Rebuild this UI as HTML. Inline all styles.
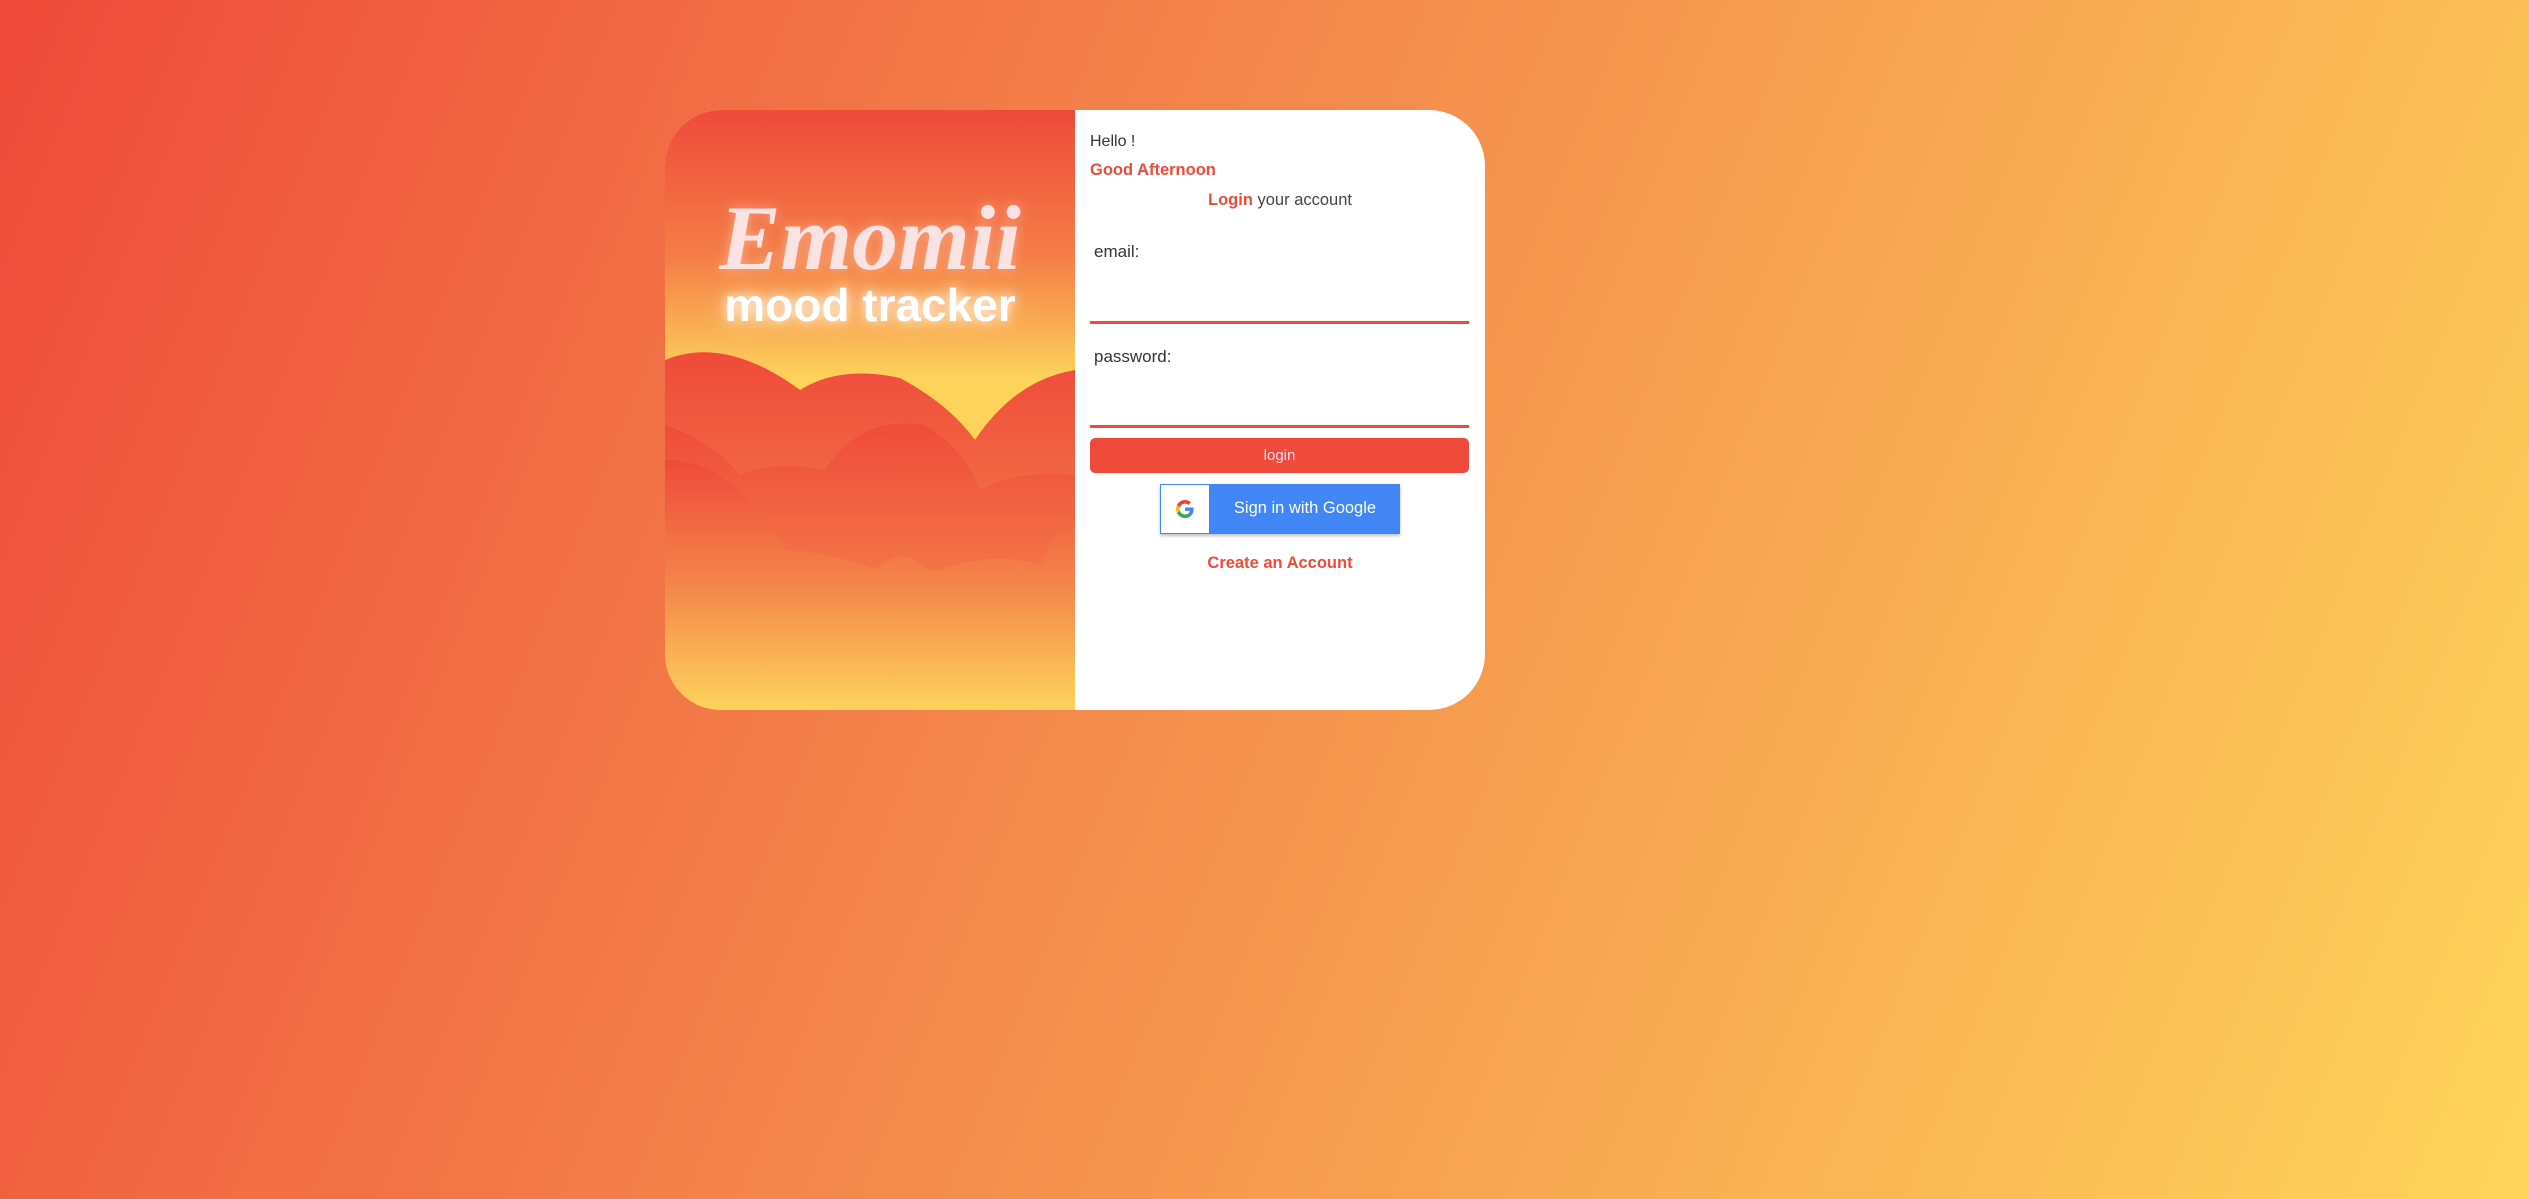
<!DOCTYPE html>
<html><head><style>
html,body{margin:0;width:2529px;height:1199px;overflow:hidden;font-family:"Liberation Sans",sans-serif;}
body{background:linear-gradient(112deg,#ef4a3a 0%,#f48a4c 45%,#fed55a 100%);position:relative;}
.card{position:absolute;left:665px;top:110px;width:820px;height:600px;border-radius:56px;overflow:hidden;background:#fff;}
.left{position:absolute;left:0;top:0;width:410px;height:600px;background:linear-gradient(180deg,#ef4a3a 0%,#f57f47 25%,#fdd35c 45%,#fdd35c 100%);}
.right{position:absolute;left:410px;top:0;width:410px;height:600px;}
.t{position:absolute;white-space:nowrap;}
.red{color:#ef4a3a;font-weight:bold;}
.line{position:absolute;left:15px;width:379px;height:3px;background:#ef4a3a;}
</style></head><body>
<div class="card">
 <div class="left">
  <svg width="410" height="600" style="position:absolute;left:0;top:0">
   <defs>
    <linearGradient id="c1" x1="0" y1="0" x2="0" y2="1"><stop offset="0" stop-color="#ef4a3a"/><stop offset="1" stop-color="#f79a50"/></linearGradient>
    <linearGradient id="c2" x1="0" y1="0" x2="0" y2="1"><stop offset="0" stop-color="#ef4a3a"/><stop offset="0.5" stop-color="#f4864a"/><stop offset="1" stop-color="#fdd35c"/></linearGradient>
   </defs>
   <path d="M0 250 Q60 225 135 280 Q175 255 235 268 Q285 295 310 330 Q350 270 410 260 L410 600 L0 600Z" fill="url(#c1)"/>
   <path d="M0 315 Q45 330 75 365 Q110 350 160 360 Q195 305 260 315 Q300 340 315 380 Q350 360 410 365 L410 600 L0 600Z" fill="url(#c1)" opacity="0.9"/>
   <path d="M0 350 Q70 350 120 440 Q160 440 210 460 Q230 440 250 450 Q265 465 275 460 Q330 440 375 455 Q390 420 410 400 L410 600 L0 600Z" fill="url(#c2)"/>
  </svg>
  <div class="t" style="left:0;width:410px;text-align:center;top:75px;font-family:'Liberation Serif',serif;font-style:italic;font-weight:bold;font-size:92px;color:#fbe3e3;text-shadow:0 0 12px rgba(255,255,255,0.4)">Emomii</div>
  <div class="t" style="left:0;width:410px;text-align:center;top:168px;font-weight:bold;font-size:46px;color:#fff;text-shadow:0 0 12px #fff,0 0 30px rgba(255,220,150,0.9)">mood tracker</div>
 </div>
 <div class="right">
  <div class="t" style="left:15px;top:23px;font-size:16px;color:#333">Hello !</div>
  <div class="t red" style="left:15px;top:51px;font-size:16.5px">Good Afternoon</div>
  <div class="t" style="left:0;width:410px;text-align:center;top:81px;font-size:16.5px;color:#444"><span class="red">Login</span> your account</div>
  <div class="t" style="left:19px;top:132px;font-size:17px;color:#333">email:</div>
  <div class="line" style="top:211px"></div>
  <div class="t" style="left:19px;top:237px;font-size:17px;color:#333">password:</div>
  <div class="line" style="top:315px"></div>
  <div style="position:absolute;left:15px;top:328px;width:379px;height:35px;background:#ef4a3a;border-radius:5px;color:#fde;font-size:15px;text-align:center;line-height:35px">login</div>
  <div style="position:absolute;left:85px;top:374px;width:240px;height:50px;background:#4285f4;box-shadow:0 2px 3px rgba(0,0,0,0.25)">
   <div style="position:absolute;left:1px;top:1px;width:48px;height:48px;background:#fff">
    <svg width="48" height="48" viewBox="0 0 48 48"><g transform="translate(15,15) scale(0.375)">
     <path fill="#EA4335" d="M24 9.5c3.5 0 6.6 1.2 9.1 3.6l6.8-6.8C35.8 2.4 30.3 0 24 0 14.6 0 6.6 5.4 2.6 13.3l7.9 6.2C12.4 13.7 17.7 9.5 24 9.5z"/>
     <path fill="#4285F4" d="M46.9 24.5c0-1.6-.1-3.1-.4-4.5H24v9h12.9c-.6 3-2.3 5.5-4.8 7.2l7.7 6c4.5-4.2 7.1-10.3 7.1-17.7z"/>
     <path fill="#FBBC05" d="M10.5 28.6c-.5-1.4-.8-3-.8-4.6s.3-3.2.8-4.6l-7.9-6.2C.9 16.5 0 20.1 0 24s.9 7.5 2.6 10.7l7.9-6.1z"/>
     <path fill="#34A853" d="M24 48c6.5 0 11.9-2.1 15.9-5.8l-7.7-6c-2.2 1.5-4.9 2.3-8.2 2.3-6.3 0-11.6-4.2-13.5-9.9l-7.9 6.1C6.6 42.6 14.6 48 24 48z"/>
    </g></svg>
   </div>
   <div class="t" style="left:50px;width:190px;text-align:center;top:15px;font-size:16.5px;color:#fff">Sign in with Google</div>
  </div>
  <div class="t red" style="left:0;width:410px;text-align:center;top:444px;font-size:16.5px">Create an Account</div>
 </div>
</div>
</body></html>
